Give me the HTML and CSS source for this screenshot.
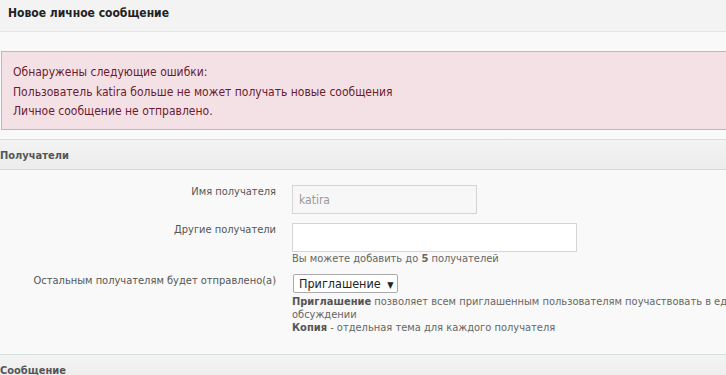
FILE: index.html
```html
<!DOCTYPE html>
<html lang="ru">
<head>
  <meta charset="UTF-8" />
  <title>Новое личное сообщение</title>
  <link rel="stylesheet" href="styles.css">
</head>
<body>
  <div class="title-bar">
    <h1>Новое личное сообщение</h1>
  </div>

  <div class="errors">
    <p>Обнаружены следующие ошибки:</p>
    <p>Пользователь katira больше не может получать новые сообщения</p>
    <p>Личное сообщение не отправлено.</p>
  </div>

  <h2 class="section-head">Получатели</h2>

  <div class="form">
    <div class="row">
      <label class="label">Имя получателя</label>
      <div class="field">
        <input type="text" class="text short" value="katira" disabled />
      </div>
    </div>

    <div class="row">
      <label class="label">Другие получатели</label>
      <div class="field">
        <input type="text" class="text long" />
        <p class="hint">Вы можете добавить до <b>5</b> получателей</p>
      </div>
    </div>

    <div class="row">
      <label class="label">Остальным получателям будет отправлено(а)</label>
      <div class="field">
        <div class="select">Приглашение <span class="arrow">▼</span></div>
        <p class="explain"><b>Приглашение</b> позволяет всем приглашенным пользователям поучаствовать в едином обсуждении<br>
        <b>Копия</b> - отдельная тема для каждого получателя</p>
      </div>
    </div>
  </div>

  <h2 class="section-head">Сообщение</h2>
</body>
</html>
```

FILE: styles.css
```css
* {
  box-sizing: border-box;
}

html {
  overflow: hidden;
}

body {
  margin: 0;
  width: 760px;
  background: #f9f9f9;
  font-family: 'DejaVu Sans Condensed', 'DejaVu Sans', Verdana, sans-serif;
  font-size: 11px;
  color: #333;
}

.title-bar {
  height: 32px;
  background: #f3f3f3;
  border-bottom: 1px solid #e6e6e6;
  padding: 6px 8px 0;
}

.title-bar h1 {
  margin: 0;
  font-size: 12px;
  font-weight: bold;
  color: #222;
}

.errors {
  margin: 19px 0 0 1px;
  height: 79px;
  background: #f4e1e6;
  border: 1px solid #dcaab5;
  padding: 11px 11px 0;
  color: #6a1b2f;
  font-size: 12px;
}

.errors p {
  margin: 0;
  line-height: 19.5px;
}

.section-head {
  margin: 9px 0 0;
  height: 31px;
  padding: 9px 0 0;
  font-size: 11px;
  font-weight: bold;
  color: #555;
  background: linear-gradient(#f3f3f3, #ececec);
  border-top: 1px solid #d2e2dd;
  border-bottom: 1px solid #d8d8d8;
}

.form {
  padding-top: 15px;
  padding-bottom: 2px;
}

.row {
  display: flex;
  margin-bottom: 9px;
}

.label {
  flex: none;
  width: 292px;
  padding: 0 16px 0 0;
  text-align: right;
  color: #555;
}

.field {
  flex: 1;
  min-width: 0;
}

.text {
  display: block;
  height: 29px;
  margin: 0;
  padding: 0 6px;
  border: 1px solid #d5d5d5;
  background: #fff;
  font-family: 'DejaVu Sans Condensed', 'DejaVu Sans', Verdana, sans-serif;
  font-size: 12px;
  color: #999;
}

.text.short {
  width: 185px;
  background: #f7f7f7;
}

.text.long {
  width: 285px;
}

.hint {
  margin: 0;
  color: #666;
}

.select {
  display: inline-block;
  margin: 0 0 0 1px;
  height: 19px;
  width: 105px;
  padding: 1px 0 0 5px;
  border: 1px solid #aaa;
  border-radius: 2px;
  background: #fff;
  font-size: 12.5px;
  line-height: 15px;
  color: #222;
}

.arrow {
  font-size: 9px;
  margin-left: 3px;
}

.explain {
  margin: 2px 0 0;
  line-height: 13px;
  color: #666;
}

.explain b {
  color: #555;
}
```
